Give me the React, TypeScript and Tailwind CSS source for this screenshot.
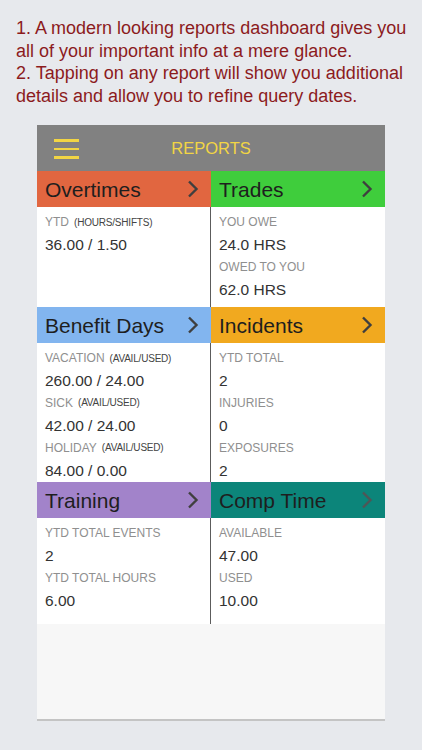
import React from 'react';

type Line = { label: string; note?: string; value: string };

type Tile = { title: string; color: string; chevron: string; lines: Line[] };

const rows: { height: string; tiles: [Tile, Tile] }[] = [
  {
    height: 'h-[100px]',
    tiles: [
      {
        title: 'Overtimes',
        color: 'bg-[#e16640]',
        chevron: '#3f3f3f',
        lines: [{ label: 'YTD', note: '(HOURS/SHIFTS)', value: '36.00 / 1.50' }],
      },
      {
        title: 'Trades',
        color: 'bg-[#3fcd3c]',
        chevron: '#3f3f3f',
        lines: [
          { label: 'YOU OWE', value: '24.0 HRS' },
          { label: 'OWED TO YOU', value: '62.0 HRS' },
        ],
      },
    ],
  },
  {
    height: 'h-[139px]',
    tiles: [
      {
        title: 'Benefit Days',
        color: 'bg-[#82b5ef]',
        chevron: '#3f3f3f',
        lines: [
          { label: 'VACATION', note: '(AVAIL/USED)', value: '260.00 / 24.00' },
          { label: 'SICK', note: '(AVAIL/USED)', value: '42.00 / 24.00' },
          { label: 'HOLIDAY', note: '(AVAIL/USED)', value: '84.00 / 0.00' },
        ],
      },
      {
        title: 'Incidents',
        color: 'bg-[#f1a91f]',
        chevron: '#3f3f3f',
        lines: [
          { label: 'YTD TOTAL', value: '2' },
          { label: 'INJURIES', value: '0' },
          { label: 'EXPOSURES', value: '2' },
        ],
      },
    ],
  },
  {
    height: 'h-[106px]',
    tiles: [
      {
        title: 'Training',
        color: 'bg-[#a283ca]',
        chevron: '#3f3f3f',
        lines: [
          { label: 'YTD TOTAL EVENTS', value: '2' },
          { label: 'YTD TOTAL HOURS', value: '6.00' },
        ],
      },
      {
        title: 'Comp Time',
        color: 'bg-[#0c857a]',
        chevron: '#4f5656',
        lines: [
          { label: 'AVAILABLE', value: '47.00' },
          { label: 'USED', value: '10.00' },
        ],
      },
    ],
  },
];

const Chevron = ({ color }: { color: string }) => (
  <svg width="12" height="18" viewBox="0 0 12 18" fill="none">
    <path d="M2 1.5 L9.5 9 L2 16.5" stroke={color} strokeWidth="2.4" strokeLinecap="butt" strokeLinejoin="miter" />
  </svg>
);

const TileHeader = ({ tile }: { tile: Tile }) => (
  <div className={`${tile.color} h-[36px] flex items-center justify-between pl-[8px] pr-[12px]`}>
    <span className="text-[21px] text-[#1e1e1e] leading-none">{tile.title}</span>
    <Chevron color={tile.chevron} />
  </div>
);

const TileBody = ({ tile, divider }: { tile: Tile; divider: boolean }) => (
  <div className={`bg-white h-full pt-[4px] pl-[8px] ${divider ? 'border-r border-[#5c5c5c]' : ''}`}>
    {tile.lines.map((l) => (
      <div key={l.label}>
        <div className="h-[22.4px] flex items-center gap-[5px]">
          <span className="text-[12px] text-[#8f8f8f]">{l.label}</span>
          {l.note && <span className="text-[10px] text-[#444444] tracking-[-0.2px]">{l.note}</span>}
        </div>
        <div className="h-[22.4px] flex items-center text-[15.5px] text-[#333333]">{l.value}</div>
      </div>
    ))}
  </div>
);

export default function App() {
  return (
    <div className="min-h-[750px] w-[422px] bg-[#e7e9ed] font-['Liberation_Sans',Arial,sans-serif] overflow-hidden">
      <div className="pt-[17px] pl-[16px] pr-[6px] text-[18px] leading-[22.5px] text-[#8c1b1d]">
        <p>1. A modern looking reports dashboard gives you all of your important info at a mere glance.</p>
        <p>2. Tapping on any report will show you additional details and allow you to refine query dates.</p>
      </div>

      <div className="mt-[18px] ml-[37px] w-[348px] bg-[#f7f7f7] border-b-[2px] border-[#c4c4c4]">
        <div className="h-[46px] bg-[#818181] relative flex items-center justify-center">
          <div className="absolute left-[17px] top-[14px] flex flex-col gap-[6px]">
            <span className="block w-[25px] h-[2.5px] bg-[#f2d544]" />
            <span className="block w-[25px] h-[2.5px] bg-[#f2d544]" />
            <span className="block w-[25px] h-[2.5px] bg-[#f2d544]" />
          </div>
          <span className="text-[16.5px] text-[#f2d544]">REPORTS</span>
        </div>

        {rows.map((row, i) => (
          <div key={i}>
            <div className="grid grid-cols-2">
              <TileHeader tile={row.tiles[0]} />
              <TileHeader tile={row.tiles[1]} />
            </div>
            <div className={`grid grid-cols-2 ${row.height}`}>
              <TileBody tile={row.tiles[0]} divider />
              <TileBody tile={row.tiles[1]} divider={false} />
            </div>
          </div>
        ))}

        <div className="h-[95px]" />
      </div>
    </div>
  );
}
